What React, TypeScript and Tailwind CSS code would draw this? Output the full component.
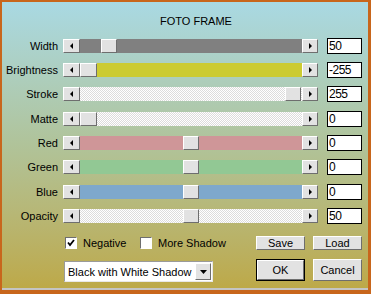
import React from 'react';

type Row = {
  label: string;
  value: string;
  track: string;
  thumb: string;
  mt: string;
};

const dither = 'bg-[repeating-conic-gradient(#dcdcdc_0%_25%,#ffffff_0%_50%)] bg-size-[2px_2px]';

const rows: Row[] = [
  { label: 'Width', value: '50', track: 'bg-[#808080]', thumb: 'left-[21px] w-[16px]', mt: 'mt-[10px]' },
  { label: 'Brightness', value: '-255', track: 'bg-[#cccb32]', thumb: 'left-0 w-[17px]', mt: 'mt-[8px]' },
  { label: 'Stroke', value: '255', track: dither, thumb: 'left-[205px] w-[16px]', mt: 'mt-[8px]' },
  { label: 'Matte', value: '0', track: dither, thumb: 'left-0 w-[17px]', mt: 'mt-[9px]' },
  { label: 'Red', value: '0', track: 'bg-[#cf9698]', thumb: 'left-[103px] w-[16px]', mt: 'mt-[8px]' },
  { label: 'Green', value: '0', track: 'bg-[#92c894]', thumb: 'left-[103px] w-[16px]', mt: 'mt-[8px]' },
  { label: 'Blue', value: '0', track: 'bg-[#7ea8cc]', thumb: 'left-[103px] w-[16px]', mt: 'mt-[9px]' },
  { label: 'Opacity', value: '50', track: dither, thumb: 'left-[103px] w-[16px]', mt: 'mt-[8px]' },
];

const bevel = 'bg-[#e2e2e2] border border-t-white border-l-white border-r-[#6e6e6e] border-b-[#6e6e6e]';

const Arrow = ({ dir }: { dir: 'left' | 'right' | 'down' }) => {
  const pts = dir === 'left' ? '3,0 3,6 0,3' : dir === 'right' ? '0,0 0,6 3,3' : '0,0 7,0 3.5,4';
  const w = dir === 'down' ? 7 : 3;
  const h = dir === 'down' ? 4 : 6;
  return (
    <svg width={w} height={h} viewBox={`0 0 ${w} ${h}`}>
      <polygon points={pts} fill="#000" />
    </svg>
  );
};

const Slider = ({ row }: { row: Row }) => (
  <div className="flex h-[14px] w-[255px]">
    <div className={`${bevel} w-[17px] h-full flex items-center justify-center`}>
      <Arrow dir="left" />
    </div>
    <div className={`relative flex-1 h-full ${row.track}`}>
      <div className={`absolute top-0 h-full ${bevel} ${row.thumb}`} />
    </div>
    <div className={`${bevel} w-[16px] h-full flex items-center justify-center`}>
      <Arrow dir="right" />
    </div>
  </div>
);

const Check = ({ checked, label }: { checked: boolean; label: string }) => (
  <div className="flex items-center">
    <div className="w-[12px] h-[12px] bg-white border border-t-[#6e6e6e] border-l-[#6e6e6e] border-r-white border-b-white flex items-center justify-center">
      {checked && (
        <svg width="8" height="8" viewBox="0 0 8 8">
          <polyline points="1,3.5 3,6 7,1" fill="none" stroke="#000" strokeWidth="1.8" />
        </svg>
      )}
    </div>
    <span className="ml-[6px] leading-[14px]">{label}</span>
  </div>
);

export default function App() {
  return (
    <div className="w-[371px] h-[294px] bg-[#c8661c] pt-[2px] pl-[2px] pr-[3px] pb-[4px] font-['Liberation_Sans',Arial,sans-serif] text-[11px] text-black">
      <div className="h-full flex flex-col bg-linear-to-b from-[#a9d9e3] via-[#b0c399] to-[#bda948] border-b-2 border-b-[#c4c4c4]">
        <div className="pt-[12px] pl-[22px] h-[26px] leading-[14px] text-center">FOTO FRAME</div>

        {rows.map((row) => (
          <div key={row.label} className={`flex items-center h-[16px] ${row.mt}`}>
            <div className="w-[56px] text-right leading-[14px]">{row.label}</div>
            <div className="ml-[5px]">
              <Slider row={row} />
            </div>
            <div className="ml-[9px] w-[35px] h-[16px] bg-white border border-black pl-[1px] text-[12px] tracking-[-0.5px] leading-[14px]">
              {row.value}
            </div>
          </div>
        ))}

        <div className="flex mt-[12px] pl-[62px] pr-[6px]">
          <div className="flex flex-col">
            <div className="flex items-center h-[14px] pl-[1px]">
              <div className="w-[75px]">
                <Check checked label="Negative" />
              </div>
              <Check checked={false} label="More Shadow" />
            </div>
            <div className="mt-[11px] w-[149px] h-[21px] bg-white border border-t-[#9a9a9a] border-l-[#9a9a9a] border-r-[#e8e8e8] border-b-[#e8e8e8] flex items-center pl-[3px] pr-[1px]">
              <span className="flex-1 leading-[14px]">Black with White Shadow</span>
              <div className={`${bevel} w-[16px] h-[17px] flex items-center justify-center`}>
                <Arrow dir="down" />
              </div>
            </div>
          </div>
          <div className="ml-auto grid grid-cols-[49px_49px] gap-x-[8px]">
            <button className={`${bevel} h-[14px] leading-[12px]`}>Save</button>
            <button className={`${bevel} h-[14px] leading-[12px]`}>Load</button>
            <div className="mt-[8px] h-[22px] border border-black">
              <button className={`${bevel} w-full h-full leading-[18px]`}>OK</button>
            </div>
            <button className={`${bevel} mt-[8px] h-[22px] leading-[20px]`}>Cancel</button>
          </div>
        </div>
      </div>
    </div>
  );
}
